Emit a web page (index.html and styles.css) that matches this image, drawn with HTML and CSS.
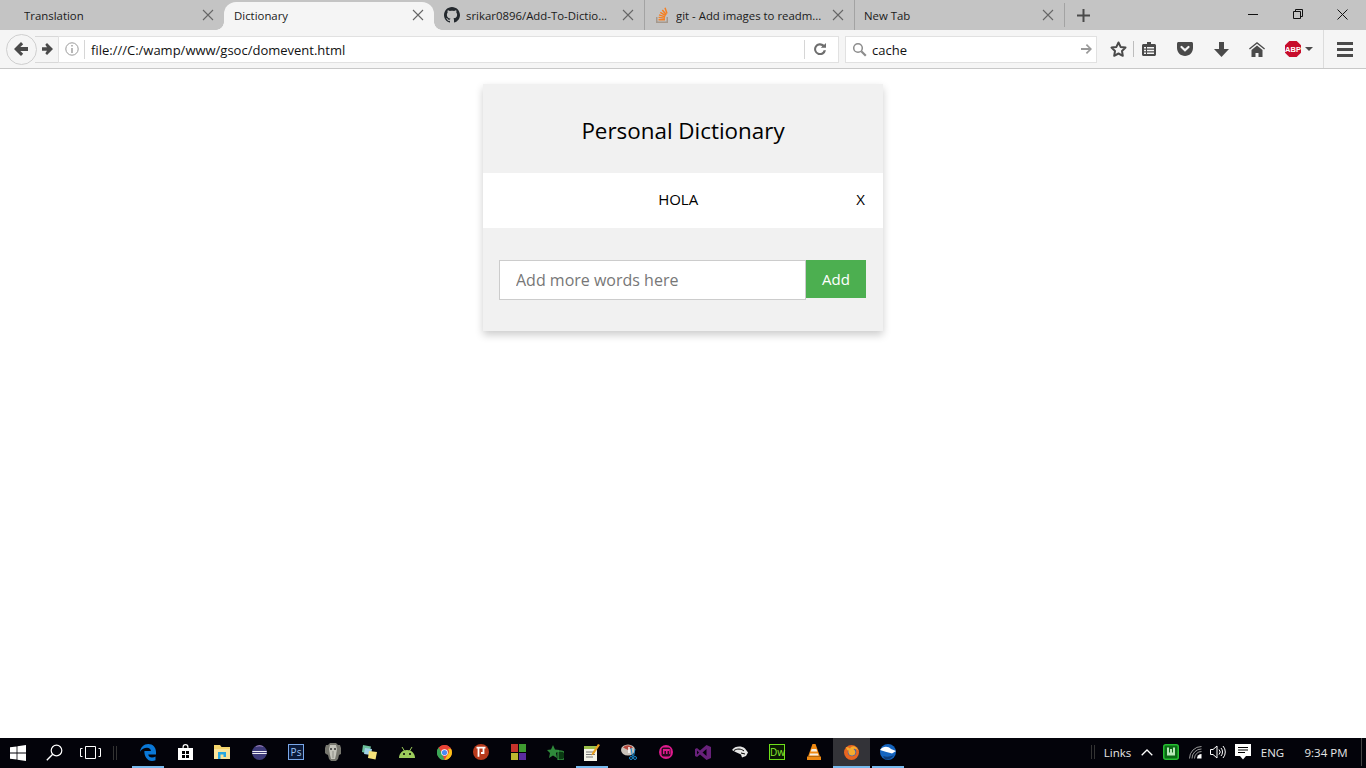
FILE: index.html
```html
<!DOCTYPE html>
<html lang="en">
<head>
    <meta charset="UTF-8">
    <meta name="viewport" content="width=device-width, initial-scale=1.0">
    <title>Dictionary</title>
    <link rel="stylesheet" href="styles.css">
</head>
<body>
    <div class="browser">
        <div class="tabstrip">
            <div class="tab">
                <span class="tab-title">Translation</span>
                <svg class="tab-close" viewBox="0 0 12 12"><path d="M1 1l10 10M11 1L1 11"/></svg>
            </div>
            <div class="tab active">
                <span class="tab-title">Dictionary</span>
                <svg class="tab-close" viewBox="0 0 12 12"><path d="M1 1l10 10M11 1L1 11"/></svg>
            </div>
            <div class="tab">
                <svg class="favicon" viewBox="0 0 16 16"><path fill="#24292e" d="M8 0C3.6 0 0 3.6 0 8c0 3.5 2.3 6.5 5.5 7.6.4.1.5-.2.5-.4v-1.4c-2.2.5-2.7-1-2.7-1-.4-.9-.9-1.2-.9-1.2-.7-.5.1-.5.1-.5.8.1 1.2.8 1.2.8.7 1.2 1.9.9 2.3.7.1-.5.3-.9.5-1.1-1.8-.2-3.6-.9-3.6-4 0-.9.3-1.6.8-2.1-.1-.2-.4-1 .1-2.1 0 0 .7-.2 2.2.8.6-.2 1.3-.3 2-.3s1.4.1 2 .3c1.5-1 2.2-.8 2.2-.8.4 1.1.2 1.9.1 2.1.5.6.8 1.3.8 2.1 0 3.1-1.9 3.7-3.7 3.9.3.3.6.8.6 1.5v2.2c0 .2.1.5.6.4C13.7 14.5 16 11.5 16 8c0-4.4-3.6-8-8-8z"/></svg>
                <span class="tab-title">srikar0896/Add-To-Dictio...</span>
                <svg class="tab-close" viewBox="0 0 12 12"><path d="M1 1l10 10M11 1L1 11"/></svg>
            </div>
            <div class="tab sep">
                <svg class="favicon" viewBox="0 0 16 16"><path fill="#a5988c" d="M2 10h1.500v4.500h9V10H14v6H2z"/><path fill="#f48024" d="M4.500 12h6.500v1.500H4.500zM4.700 9.700l6.400.8-.2 1.400-6.400-.8zM5.300 7.200l6.100 2-.5 1.400-6.100-2zM6.700 4.800l5.400 3.300-.8 1.200-5.400-3.300zM8.900 2.500l4 4.800-1.200.9-4-4.800zM11.700.5l2 5.800-1.400.5-2-5.800z"/></svg>
                <span class="tab-title">git - Add images to readm...</span>
                <svg class="tab-close" viewBox="0 0 12 12"><path d="M1 1l10 10M11 1L1 11"/></svg>
            </div>
            <div class="tab sep">
                <span class="tab-title">New Tab</span>
                <svg class="tab-close" viewBox="0 0 12 12"><path d="M1 1l10 10M11 1L1 11"/></svg>
            </div>
            <div class="newtab">
                <svg width="13" height="13" viewBox="0 0 13 13"><path d="M5.500 0h2v5.500H13v2H7.500V13h-2V7.500H0v-2h5.500z" fill="#4a4a4a"/></svg>
            </div>
            <div class="window-controls">
                <div class="win-btn"><svg width="10" height="10" viewBox="0 0 10 10"><path d="M0 5.500h10" stroke="#111" fill="none"/></svg></div>
                <div class="win-btn"><svg width="10" height="10" viewBox="0 0 10 10"><path d="M.5 2.500h7v7h-7zM2.500 2.500v-2h7v7h-2" stroke="#111" fill="none"/></svg></div>
                <div class="win-btn"><svg width="11" height="11" viewBox="0 0 11 11"><path d="M.5.500l10 10M10.500.500l-10 10" stroke="#111" fill="none"/></svg></div>
            </div>
        </div>

        <div class="navbar">
            <div class="back-btn">
                <svg width="14" height="14" viewBox="0 0 14 14"><path d="M7 0l2.200 2.200L6.300 5H14v4H6.300l2.900 2.800L7 14 0 7z" fill="#4a4a4a"/></svg>
            </div>
            <div class="forward-btn">
                <svg width="11" height="12" viewBox="0 0 11 12"><path d="M5 0l6 6-6 6-1.700-1.700L5 7.800H0V4.200h5L3.300 1.700z" fill="#4a4a4a"/></svg>
            </div>
            <div class="urlbar">
                <svg class="info-icon" width="14" height="14" viewBox="0 0 14 14"><circle cx="7" cy="7" r="6.200" fill="none" stroke="#9a9a9a"/><path d="M6.300 3h1.400v1.500H6.300zM6.300 6h1.400v5H6.300z" fill="#9a9a9a"/></svg>
                <span class="url-text">file:///C:/wamp/www/gsoc/domevent.html</span>
                <span class="reload">
                    <svg width="12" height="12" viewBox="0 0 12 12"><path d="M9.600 7.200A3.800 3.800 0 1 1 8.300 3.300L6.800 4.800H12V0l-1.800 1.800A6 6 0 1 0 12 7.200z" fill="#6e6e6e"/></svg>
                </span>
            </div>
            <div class="searchbar">
                <svg width="15" height="15" viewBox="0 0 15 15"><circle cx="6" cy="6" r="4.300" fill="none" stroke="#8c8c8c" stroke-width="1.500"/><path d="M9.300 9.300l4.500 4.500" stroke="#8c8c8c" stroke-width="2.200"/></svg>
                <span class="search-text">cache</span>
                <svg width="11" height="10" viewBox="0 0 11 10"><path d="M6 0l5 5-5 5-1.200-1.200 2.900-2.900H0V4.100h7.700L4.800 1.200z" fill="#999"/></svg>
            </div>
            <div class="tool tool-star">
                <svg width="17" height="16" viewBox="0 0 17 16"><path d="M8.500 1.500l2.100 4.400 4.900.7-3.500 3.400.8 4.800-4.300-2.300-4.300 2.300.8-4.800-3.500-3.400 4.900-.7z" fill="none" stroke="#4a4a4a" stroke-width="2" stroke-linejoin="round"/></svg>
            </div>
            <div class="tool-divider"></div>
            <div class="tool tool-clip">
                <svg width="14" height="14" viewBox="0 0 14 14"><path d="M5 0h4v2h3.500c.8 0 1.500.7 1.500 1.500v9c0 .8-.7 1.500-1.500 1.500h-11C.7 14 0 13.300 0 12.500v-9C0 2.700.7 2 1.500 2H5z" fill="#4a4a4a"/><path d="M2 5h2v1.500H2zM5 5h7v1.500H5zM2 7.800h2v1.500H2zM5 7.800h7v1.500H5zM2 10.600h2v1.500H2zM5 10.600h7v1.500H5z" fill="#f5f5f5"/></svg>
            </div>
            <div class="tool">
                <svg width="16" height="14" viewBox="0 0 16 14"><path d="M1.500 0h13c.8 0 1.500.7 1.500 1.500V6c0 4.400-3.600 8-8 8s-8-3.600-8-8V1.500C0 .7.700 0 1.500 0z" fill="#4a4a4a"/><path d="M4.500 5L8 8.300 11.500 5" fill="none" stroke="#f5f5f5" stroke-width="2.200" stroke-linecap="round"/></svg>
            </div>
            <div class="tool">
                <svg width="15" height="15" viewBox="0 0 15 15"><path d="M5 0h5v7h5l-7.500 8L0 7h5z" fill="#4a4a4a"/></svg>
            </div>
            <div class="tool">
                <svg width="16" height="15" viewBox="0 0 16 15"><path d="M8 0l8 6.500-.8 1L8 1.800.8 7.500 0 6.500z" fill="#4a4a4a"/><path d="M8 3.500l5.500 4.400V15H9.500v-4h-3v4H2.500V7.900z" fill="#4a4a4a"/></svg>
            </div>
            <div class="tool tool-abp">
                <svg width="18" height="18" viewBox="0 0 18 18"><path d="M5.300 1h7.400L17 5.300v7.400L12.700 17H5.300L1 12.700V5.300z" fill="#c70d2c"/><text x="9" y="11.800" class="abp-label">ABP</text></svg>
                <span class="caret"></span>
            </div>
            <div class="tool-sep"></div>
            <div class="tool-menu">
                <span></span><span></span><span></span>
            </div>
        </div>

        <div class="page">
            <div class="dictionary">
                <div class="dictionary-head">
                    <h2>Personal Dictionary</h2>
                </div>
                <ul class="word-list">
                    <li><span class="word">HOLA</span><span class="remove">X</span></li>
                </ul>
                <form class="add-form">
                    <input type="text" class="add-input" placeholder="Add more words here">
                    <button type="button" class="add-btn">Add</button>
                </form>
            </div>
        </div>

        <div class="taskbar">
            <div class="task-sys">
                <svg width="16" height="16" viewBox="0 0 16 16"><path d="M0 2.300l6.600-.9v6.200H0zM7.400 1.300L16 0v7.600H7.400zM0 8.400h6.600v6.200L0 13.700zM7.400 8.400H16V16l-8.600-1.200z" fill="#fff"/></svg>
            </div>
            <div class="task-sys">
                <svg width="17" height="17" viewBox="0 0 17 17"><circle cx="10.500" cy="6.500" r="5.300" fill="none" stroke="#fff" stroke-width="1.200"/><path d="M6.700 10.300L.8 16.200" stroke="#fff" stroke-width="1.400"/></svg>
            </div>
            <div class="task-sys">
                <svg width="21" height="13" viewBox="0 0 21 13"><path d="M5.500.5h10v12h-10z M2.500 2.500H.5v8h2M18.500 2.500h2v8h-2" fill="none" stroke="#fff"/></svg>
            </div>
            <div class="task-gap"><span></span><span></span></div>

            <div class="task-app running">
                <svg width="16" height="17" viewBox="0 0 16 17"><path d="M8.300 0C3.800 0 .6 3.300 0 7.700 1.500 5.200 4.300 3.700 7 3.700c2.300 0 3.900 1.400 3.900 3.200H4.400C4 11.500 7 17 12 17c1.400 0 2.600-.3 3.500-.8v-3.700c-1 .6-2.200 1-3.500 1-2 0-3.600-1-3.700-2.900H16V8C16 3.300 12.900 0 8.300 0z" fill="#0a78d7"/></svg>
            </div>
            <div class="task-app">
                <svg width="15" height="16" viewBox="0 0 15 16"><path d="M4.500 4V3a3 3 0 0 1 6 0v1H15v12H0V4z" fill="#fff"/><path d="M5.700 4V3a1.800 1.800 0 0 1 3.600 0v1z" fill="#000"/><path d="M4 7h3v3H4zM8 7h3v3H8zM4 11h3v3H4zM8 11h3v3H8z" fill="#000"/></svg>
            </div>
            <div class="task-app">
                <svg width="16" height="14" viewBox="0 0 16 14"><path d="M0 0h6l1.500 2H16v12H0z" fill="#f4d56c"/><path d="M0 4h16v10H0z" fill="#fbe49a"/><path d="M4 7h8v5H9.500V9.500h-3V14H4z" fill="#28a8e0"/></svg>
            </div>
            <div class="task-app">
                <svg width="15" height="15" viewBox="0 0 15 15"><circle cx="7.500" cy="7.500" r="7.500" fill="#3d3a78"/><path d="M.3 6h14.400v1H.3zM.3 8h14.400v1H.3z" fill="#f0f0f5"/><path d="M3 2a7 7 0 0 1 9 0c-3-1-6-1-9 0z" fill="#b08fc4"/></svg>
            </div>
            <div class="task-app">
                <div class="ps-icon">Ps</div>
            </div>
            <div class="task-app">
                <svg width="16" height="18" viewBox="0 0 16 18"><path d="M5 0h6l2 2h2l1 3v6l-2 1-1 4-2 2H6l-2-2-1-4-2-1-1-1V5l1-3h2z" fill="#77776f"/><path d="M5 2h6l1 4-1 6-1 4H6l-1-4-1-6z" fill="#c4c4bb"/><circle cx="6" cy="6" r="1" fill="#333"/><circle cx="10" cy="6" r="1" fill="#333"/><path d="M7.500 8h1v7h-1z" fill="#8b8b85"/></svg>
            </div>
            <div class="task-app">
                <svg width="16" height="15" viewBox="0 0 16 15"><path d="M1 0l8 1.500L7 9 0 7z" fill="#6bbf9a"/><path d="M3 3l7 1-1 6-7-1z" fill="#9fd0e6"/><path d="M7 6l8 1-1.500 7.500L6 13z" fill="#f6e27a"/></svg>
            </div>
            <div class="task-app">
                <svg width="16" height="11" viewBox="0 0 16 11"><path d="M0 11C0 6.500 3.500 3 8 3s8 3.500 8 8z" fill="#9ccc5c"/><path d="M3 0l2.500 4M13 0l-2.500 4" stroke="#9ccc5c"/><circle cx="5" cy="7" r="1" fill="#000"/><circle cx="11" cy="7" r="1" fill="#000"/></svg>
            </div>
            <div class="task-app">
                <svg width="15" height="15" viewBox="0 0 15 15"><circle cx="7.500" cy="7.500" r="7.500" fill="#dd4b3e"/><path d="M7.500 0a7.500 7.500 0 0 1 6.500 3.800H7.500a3.700 3.700 0 0 0-3.400 2.200L1.700 2.600A7.500 7.500 0 0 1 7.500 0z" fill="#e94235"/><path d="M1.700 2.600L5 8.800l2.500 6.200A7.500 7.500 0 0 1 1.700 2.600z" fill="#3aa757"/><path d="M14 3.800a7.500 7.500 0 0 1-6.500 11.200l3.200-5.600a3.700 3.700 0 0 0 0-5.600z" fill="#fbc116"/><circle cx="7.500" cy="7.500" r="3.300" fill="#fff"/><circle cx="7.500" cy="7.500" r="2.600" fill="#4a8af4"/></svg>
            </div>
            <div class="task-app">
                <svg width="16" height="16" viewBox="0 0 16 16"><circle cx="8" cy="8" r="8" fill="#b83a1c"/><path d="M3.500 3.700h9M5.500 3.700v9M10.500 3.700v5.300H8" fill="none" stroke="#fff" stroke-width="1.800"/></svg>
            </div>
            <div class="task-app">
                <svg width="15" height="16" viewBox="0 0 15 16"><path d="M0 0h7v8H0z" fill="#c6322b"/><path d="M8 0h7v8H8z" fill="#3f9b30"/><path d="M0 9h7v7H0z" fill="#bfb72f"/><path d="M8 9h7v7H8z" fill="#5b2da0"/></svg>
            </div>
            <div class="task-app">
                <svg width="17" height="15" viewBox="0 0 17 15"><path d="M6 0l2 4.500 4.500.5L9 8l1 5-4-2.500L2 13l1-5L0 5l4-.5z" fill="#2f8a3b"/><path d="M11 6h3a3 3 0 0 1 0 9h-3z" fill="#0a3a12" stroke="#3fae4c"/></svg>
            </div>
            <div class="task-app running">
                <svg width="16" height="17" viewBox="0 0 16 17"><path d="M0 2h13v15H0z" fill="#f4f4e8"/><path d="M0 2h13v3H0z" fill="#9bbf4a"/><path d="M2 8h9M2 10.500h9M2 13h7" stroke="#777"/><path d="M14 0l2 1-6 9-2.500 1.500L8 9z" fill="#e8a020"/></svg>
            </div>
            <div class="task-app">
                <svg width="17" height="16" viewBox="0 0 17 16"><ellipse cx="7" cy="6" rx="7" ry="5.500" fill="#c9c0b8"/><path d="M2 3.500a6 5 0 0 1 10 0L7 6z" fill="#b5473c"/><path d="M8 3v6" stroke="#fff" stroke-width="1.500"/><circle cx="10" cy="14" r="1.500" fill="none" stroke="#1c8cd0"/><circle cx="14" cy="14" r="1.500" fill="none" stroke="#1c8cd0"/><path d="M10 4l1.500 8.500M14 5l-1.500 7.500" stroke="#1c8cd0"/></svg>
            </div>
            <div class="task-app">
                <svg width="14" height="14" viewBox="0 0 14 14"><circle cx="7" cy="7" r="7" fill="#e01a8e"/><rect x="2.500" y="2.500" width="9" height="9" rx="2" fill="#2a0a20"/><path d="M4 4v5h1.500V6H7v3h1.500V6H10v3h.8V4z" fill="#e01a8e"/></svg>
            </div>
            <div class="task-app">
                <svg width="16" height="15" viewBox="0 0 16 15"><path d="M11.500 0L16 2v11l-4.500 2L5 9.500 2 12 0 11V4l2-1 3 2.500zM2 5.500v4L4 7.500zM11.500 4L7.500 7.500l4 3.500z" fill="#68217a"/></svg>
            </div>
            <div class="task-app">
                <svg width="16" height="12" viewBox="0 0 16 12"><path d="M0 4C3 0 9-.5 13 2.500L16 6.500l-2 3.500-4 1.500L9 8.500 3.500 6z" fill="#e6e6e6"/><path d="M2 4.500c3-2 7-2 10 .5M9 7l4 1" stroke="#000" fill="none"/></svg>
            </div>
            <div class="task-app">
                <div class="dw-icon">Dw</div>
            </div>
            <div class="task-app">
                <svg width="14" height="16" viewBox="0 0 14 16"><path d="M5.500 0h3L13 12.500H1z" fill="#f08a12"/><path d="M4.600 5h4.800l.8 2.500H3.800zM3.100 9.500h7.800l.6 2H2.500z" fill="#f5f0e6"/><path d="M0 12.500h14V16H0z" fill="#f08a12"/></svg>
            </div>
            <div class="task-app active running">
                <svg width="15" height="15" viewBox="0 0 15 15"><circle cx="7.500" cy="7.500" r="7.500" fill="#e8641f"/><circle cx="8" cy="7" r="4.300" fill="#3a62b5"/><path d="M2 2c2 0 3 1 4 1.500C8-.5 13 1 14.500 6 13 4 11 3.500 9.500 4c1.500 1 2.500 3 1.500 5-1 1.500-3 2-5 1-1.500-1-2-3-1.500-4.500C3 5.500 2.500 4 2 2z" fill="#f5ab2e"/></svg>
            </div>
            <div class="task-app running">
                <svg width="16" height="16" viewBox="0 0 16 16"><circle cx="8" cy="8" r="8" fill="#1565c0"/><path d="M0 6C3 2 8 2 11 5l5 2-4 2.500C9 8.500 4 7.500 0 6z" fill="#fff"/><path d="M3 12c3 1 7 1 11-1-2 3-5 4.500-7 4.500-2 0-3-1-4-3.500z" fill="#0d3d7a"/></svg>
            </div>

            <div class="tray">
                <div class="tray-sep"><span></span><span></span></div>
                <div class="tray-links">Links</div>
                <div class="tray-caret">
                    <svg width="12" height="7" viewBox="0 0 12 7"><path d="M.7 6.300L6 1l5.300 5.300" fill="none" stroke="#fff" stroke-width="1.300"/></svg>
                </div>
                <div class="tray-green">
                    <svg width="16" height="16" viewBox="0 0 16 16"><rect x=".75" y=".75" width="14.500" height="14.500" rx="2" fill="#0a6a14" stroke="#25c030" stroke-width="1.500"/><path d="M4 3.500h2v5h1V5h2v3.500h1v-5h2v8H4z" fill="#b7e8b7"/></svg>
                </div>
                <div class="tray-wifi">
                    <svg width="13" height="13" viewBox="0 0 13 13"><path d="M.5 12.500a12 12 0 0 1 12-12M3 12.500A9.500 9.500 0 0 1 12.500 3M5.500 12.500a7 7 0 0 1 7-7" fill="none" stroke="#9a9a9a"/><path d="M8 12.500a4.500 4.500 0 0 1 4.500-4.500v4.500z" fill="#fff"/></svg>
                </div>
                <div class="tray-sound">
                    <svg width="16" height="14" viewBox="0 0 16 14"><path d="M.5 4.500h2.500L7 1v12L3 9.500H.5z" fill="none" stroke="#fff"/><path d="M9 4.500a3.500 3.500 0 0 1 0 5M11 3a6 6 0 0 1 0 8M13 1a9 9 0 0 1 0 12" fill="none" stroke="#fff"/></svg>
                </div>
                <div class="tray-note">
                    <svg width="16" height="16" viewBox="0 0 16 16"><path d="M0 0h16v12h-5l-3 3.500L5 12H0z" fill="#fff"/><path d="M3 3h10v1H3zM3 5.500h10v1H3zM3 8h7v1H3z" fill="#000"/></svg>
                </div>
                <div class="tray-lang">ENG</div>
                <div class="tray-clock">9:34 PM</div>
                <div class="show-desktop"></div>
            </div>
        </div>
    </div>
</body>
</html>
```

FILE: styles.css
```css
* {
    box-sizing: border-box;
}

html, body {
    margin: 0;
    padding: 0;
    height: 100%;
    overflow: hidden;
}

body {
    font-family: "Open Sans", "Noto Sans", sans-serif;
    color: #000;
    background-color: #fff;
}

.browser {
    display: flex;
    flex-direction: column;
    height: 768px;
}

/* tabs */
.tabstrip {
    display: flex;
    height: 30px;
    padding-left: 14px;
    background-color: #c4c4c4;
    flex: none;
}

.tab {
    position: relative;
    display: flex;
    align-items: center;
    width: 210px;
    height: 30px;
    padding: 0 10px 0 10px;
    font-size: 11.400px;
    color: #1a1a1a;
}

.tab.sep {
    border-left: 1px solid #a3a3a3;
    padding-left: 9px;
}

.tab.active {
    height: 28px;
    margin-top: 2px;
    padding-bottom: 2px;
    background-color: #f5f5f5;
    border-radius: 12px 12px 0 0;
}

.tab.active::before,
.tab.active::after {
    content: "";
    position: absolute;
    bottom: 0;
    width: 8px;
    height: 8px;
}

.tab.active::before {
    left: -8px;
    background: radial-gradient(circle at 0 0, transparent 7.500px, #f5f5f5 8px);
}

.tab.active::after {
    right: -8px;
    background: radial-gradient(circle at 100% 0, transparent 7.500px, #f5f5f5 8px);
}

.tab-title {
    flex: 1;
    white-space: nowrap;
    overflow: hidden;
}

.tab-close {
    width: 12px;
    height: 12px;
    flex: none;
    stroke: #666;
    stroke-width: 1.100;
    fill: none;
}

.favicon {
    width: 16px;
    height: 16px;
    margin-right: 6px;
    flex: none;
}

.newtab {
    display: flex;
    align-items: center;
    justify-content: center;
    width: 37px;
    border-left: 1px solid #a3a3a3;
    margin: 3px 0;
}

.window-controls {
    display: flex;
    margin-left: auto;
    margin-right: 1px;
}

.win-btn {
    display: flex;
    align-items: center;
    justify-content: center;
    width: 45px;
    height: 28px;
}

/* toolbar */
.navbar {
    display: flex;
    align-items: center;
    height: 39px;
    padding-left: 6px;
    background-color: #f5f5f5;
    border-bottom: 1px solid #c8c8c8;
    flex: none;
}

.back-btn {
    position: relative;
    z-index: 1;
    display: flex;
    align-items: center;
    justify-content: center;
    width: 31px;
    height: 31px;
    padding-right: 1px;
    background-color: #f5f5f5;
    border: 1px solid #cfcfcf;
    border-radius: 50%;
}

.forward-btn {
    display: flex;
    align-items: center;
    justify-content: flex-end;
    width: 23px;
    height: 27px;
    margin-left: -2px;
    padding-right: 5px;
    border: 1px solid #d8d8d8;
    border-left: 0;
    border-right: 0;
}

.urlbar {
    display: flex;
    align-items: center;
    width: 781px;
    height: 27px;
    background-color: #fff;
    border: 1px solid #e1e1e1;
    font-size: 13px;
}

.info-icon {
    margin-left: 6px;
    flex: none;
}

.url-text {
    flex: 1;
    margin-left: 5px;
    padding: 2px 0 0 6px;
    border-left: 1px solid #d6d6d6;
    color: #111;
    line-height: 17px;
}

.reload {
    display: flex;
    align-items: center;
    width: 34px;
    height: 19px;
    padding-left: 9px;
    border-left: 1px solid #d6d6d6;
}

.searchbar {
    display: flex;
    align-items: center;
    width: 252px;
    height: 27px;
    margin-left: 6px;
    padding: 0 4px 0 6px;
    background-color: #fff;
    border: 1px solid #e1e1e1;
    font-size: 13px;
}

.search-text {
    flex: 1;
    margin-left: 5px;
    padding-top: 1px;
    color: #111;
}

.tool {
    display: flex;
    align-items: center;
    justify-content: center;
    width: 36px;
    height: 38px;
}

.tool-star {
    width: 30px;
    margin-left: 6px;
}

.tool-clip {
    width: 30px;
    margin-right: 3px;
}

.tool-divider {
    width: 1px;
    height: 16px;
    background-color: #bdbdbd;
}

.tool-abp {
    justify-content: flex-start;
    width: 48px;
    padding-left: 9px;
}

.abp-label {
    font-family: "Liberation Sans", Arial, sans-serif;
    font-size: 7.500px;
    font-weight: 700;
    fill: #fff;
    text-anchor: middle;
}

.caret {
    margin-left: 3px;
    border-top: 4px solid #4a4a4a;
    border-left: 4px solid transparent;
    border-right: 4px solid transparent;
}

.tool-sep {
    width: 1px;
    height: 38px;
    background-color: #dcdcdc;
}

.tool-menu {
    display: flex;
    flex-direction: column;
    align-items: center;
    gap: 3px;
    width: 42px;
}

.tool-menu span {
    width: 16px;
    height: 3px;
    background-color: #4a4a4a;
}

/* page */
.page {
    flex: 1;
    padding-top: 15px;
    background-color: #fff;
}

.dictionary {
    width: 400px;
    margin: 0 auto;
    background-color: #f1f1f1;
    box-shadow: 0 4px 8px rgba(0, 0, 0, 0.2);
}

.dictionary-head {
    display: flex;
    align-items: center;
    justify-content: center;
    height: 89px;
    padding-top: 3px;
}

.dictionary-head h2 {
    margin: 0;
    font-size: 22.400px;
    font-weight: 400;
}

.word-list {
    margin: 0;
    padding: 0;
    list-style: none;
}

.word-list li {
    display: flex;
    align-items: center;
    height: 55px;
    padding: 0 18px 3px 17px;
    background-color: #fff;
    font-size: 15px;
}

.word {
    flex: 1;
    text-align: center;
}

.add-form {
    display: flex;
    align-items: flex-start;
    padding: 32px 17px 31px 16px;
}

.add-input {
    width: 307px;
    height: 40px;
    padding: 0 16px;
    border: 1px solid #ccc;
    background-color: #fff;
    font-family: inherit;
    font-size: 16px;
    outline: none;
}

.add-input::placeholder {
    color: #777;
    opacity: 1;
}

.add-btn {
    width: 60px;
    height: 38px;
    padding: 0;
    border: none;
    background-color: #4caf50;
    color: #fff;
    font-family: inherit;
    font-size: 15px;
}

/* windows taskbar */
.taskbar {
    display: flex;
    align-items: stretch;
    height: 30px;
    flex: none;
    background-color: #03030a;
    color: #e6e6e6;
    font-size: 11.500px;
}

.task-sys {
    display: flex;
    align-items: center;
    justify-content: center;
    width: 36px;
    padding-bottom: 1px;
}

.task-gap {
    display: flex;
    align-items: center;
    gap: 2px;
    width: 21.500px;
    padding-left: 5px;
}

.task-gap span,
.tray-sep span {
    width: 1px;
    height: 14px;
    background-color: #333;
}

.task-app {
    display: flex;
    align-items: center;
    justify-content: center;
    width: 37px;
    border-bottom: 2px solid transparent;
}

.task-app.running {
    border-image: linear-gradient(90deg, transparent 4px, #76b9ed 4px, #76b9ed 32px, transparent 32px) 2;
}

.task-app.active {
    background-color: #333338;
    border-image: none;
    border-bottom-color: #76b9ed;
}

.ps-icon,
.dw-icon {
    width: 16px;
    height: 16px;
    font-size: 10px;
    line-height: 14px;
    text-align: center;
}

.ps-icon {
    border: 1px solid #7aa7e8;
    background-color: #0a1a3a;
    color: #9cc3f5;
}

.dw-icon {
    border: 1px solid #6ee01a;
    background-color: #0a1a02;
    color: #8aee30;
}

.tray {
    display: flex;
    align-items: center;
    margin-left: auto;
    padding-bottom: 2px;
}

.tray > div {
    display: flex;
    align-items: center;
    justify-content: center;
}

.tray-sep {
    gap: 2px;
    width: 14px;
}

.tray-links {
    width: 37px;
    padding-right: 2px;
}

.tray-caret {
    width: 20px;
}

.tray-green {
    width: 27px;
}

.tray-wifi {
    width: 23px;
}

.tray-sound {
    width: 22px;
}

.tray-note {
    width: 28px;
}

.tray-lang {
    width: 31px;
}

.tray-clock {
    width: 73px;
    padding-left: 3px;
}

.show-desktop {
    width: 1px;
    height: 28px;
    margin-right: 4px;
    background-color: #444;
}
```
